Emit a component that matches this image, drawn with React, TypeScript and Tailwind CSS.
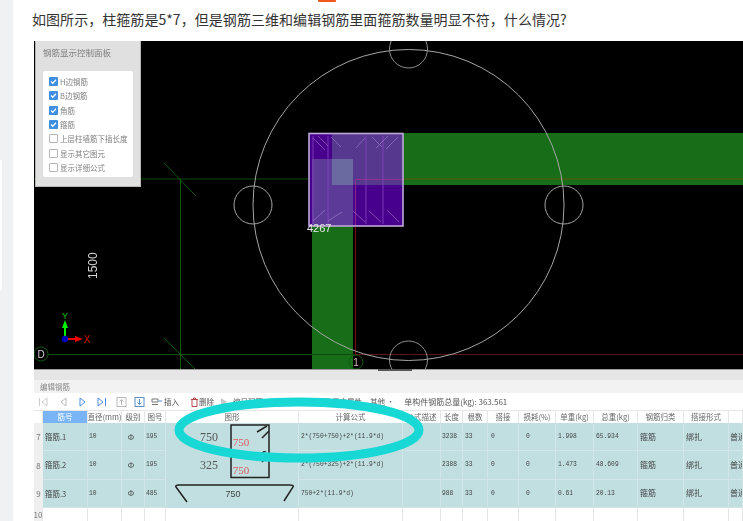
import React from "react";

const cjk = { fontFamily: '"Noto Sans CJK SC", "Liberation Sans", sans-serif' };

const heads = ["", "筋号", "直径(mm)", "级别", "图号", "图形", "计算公式", "公式描述", "长度", "根数", "搭接", "损耗(%)", "单重(kg)", "总重(kg)", "钢筋归类", "搭接形式", ""];
const gridCols = "grid grid-cols-[9px_45px_34px_23px_21px_133px_104px_38px_22px_25px_31px_37px_38px_44px_46px_45px_14px]";

const rows = [
  { n: "7", name: "箍筋.1", code: "195", formula: "2*(750+750)+2*(11.9*d)", len: "3238", unit: "1.998", total: "65.934", kind: 0, dim: "750" },
  { n: "8", name: "箍筋.2", code: "195", formula: "2*(750+325)+2*(11.9*d)", len: "2388", unit: "1.473", total: "48.609", kind: 1, dim: "325" },
  { n: "9", name: "箍筋.3", code: "485", formula: "750+2*(11.9*d)", len: "988", unit: "0.61", total: "20.13", kind: 2, dim: "750" },
];

function Shape({ kind, dim }: { kind: number; dim: string }) {
  if (kind === 2) {
    return (
      <svg width="133" height="28" viewBox="0 0 133 28" className="block">
        <path d="M21 22 L10 7 Q9 5 13 5 L124 5 Q128 5 127 7 L118 21" fill="none" stroke="#222" strokeWidth="1.5" />
        <text x="67" y="17" textAnchor="middle" fontSize="9" fill="#444" fontFamily="Liberation Sans">750</text>
      </svg>
    );
  }
  const top = kind === 0;
  return (
    <svg width="133" height="28" viewBox="0 0 133 28" className="block">
      <path d={top ? "M65 29 V2 H103 V29" : "M65 -2 V26.5 H103 V-2"} fill="none" stroke="#222" strokeWidth="1.5" />
      <path d={top ? "M91 9 L101 3 M96 15 L103 8" : "M91 5 L101 -1 M96 11 L103 4"} stroke="#222" strokeWidth="1.5" />
      <text x="43" y="18" textAnchor="middle" fontSize="12" fill="#555" fontFamily="Liberation Serif">{dim}</text>
      <text x="75" y="22.5" textAnchor="middle" fontSize="11" fill="#dc5a5a" fontFamily="Liberation Serif">750</text>
    </svg>
  );
}

function Tool({ children, label, className }: { children?: React.ReactNode; label?: string; className?: string }) {
  return (
    <div className={"flex items-center " + (className ?? "")}>
      {children}
      {label && <span className="text-[7.5px] text-[#555] whitespace-nowrap">{label}</span>}
    </div>
  );
}

const Check = ({ on, label }: { on: boolean; label: string }) => (
  <div className="flex h-[14.3px] items-center gap-[2px]">
    {on ? (
      <span className="flex h-[9px] w-[9px] items-center justify-center rounded-[1px] bg-[#3f8ee0]">
        <svg width="7" height="7" viewBox="0 0 8 8"><path d="M1.2 4 L3.2 6 L6.8 2" fill="none" stroke="#fff" strokeWidth="1.4" /></svg>
      </span>
    ) : (
      <span className="h-[9px] w-[9px] rounded-[1px] border border-[#b5b5b5] bg-white" />
    )}
    <span className="text-[7.5px] text-[#808080] whitespace-nowrap">{label}</span>
  </div>
);

function Canvas() {
  const diag = "#b48ad8";
  return (
    <svg className="absolute inset-0 h-full w-full" viewBox="34 41 709 328">
      <rect x="332" y="133" width="411" height="52" fill="#186e18" />
      <rect x="312" y="226" width="41" height="143" fill="#186e18" />
      <path d="M34 179 H743" stroke="#0b4d0b" strokeWidth="1" />
      <path d="M403 179 H743" stroke="#66661a" strokeWidth="1" />
      <path d="M180.5 179 V369 M164 163 L196 196 M164 338 L195 369" stroke="#0d5a0d" strokeWidth="1" fill="none" />
      <path d="M48 354.5 H356" stroke="#0d4d0d" strokeWidth="1" />
      <path d="M356 354.5 H743" stroke="#5a1414" strokeWidth="1" />
      <path d="M355.5 226 V355" stroke="#701010" strokeWidth="1.2" />
      <rect x="309" y="133" width="94" height="93" fill="#47008c" />
      <rect x="332" y="134" width="71" height="51" fill="#56388e" />
      <rect x="312" y="159" width="41" height="67" fill="#5c3b98" />
      <rect x="332" y="159" width="21" height="26" fill="#6a6aa0" />
      <path d="M355.5 180 V226 M355.5 179.5 H403" stroke="#a0308c" strokeWidth="0.8" />
      <path d="M313 136 V224 M328 136 V224 M366 136 V224 M383 136 V224" stroke="#8c44c4" strokeWidth="0.8" />
      <path d="M313 138 L325 150 M318 136 L328 146 M331 137 L341 147 M365 138 L356 148 M372 137 L382 147 M388 136 L376 148 M398 137 L386 149 M313 221 L325 210 M328 221 L342 212 M353 211 L365 222 M369 211 L381 222 M387 210 L399 222" stroke={diag} strokeWidth="0.8" opacity="0.65" />
      <rect x="309" y="133.5" width="94" height="92.5" fill="none" stroke="#bfa8d8" strokeWidth="1.6" />
      <circle cx="408.5" cy="205" r="155.5" fill="none" stroke="#a5a5a5" strokeWidth="1" />
      <circle cx="408.5" cy="49" r="19" fill="none" stroke="#8f8f8f" strokeWidth="1" />
      <circle cx="408.5" cy="360" r="19" fill="none" stroke="#8f8f8f" strokeWidth="1" />
      <circle cx="253" cy="205" r="19" fill="none" stroke="#a5a5a5" strokeWidth="1" />
      <circle cx="564" cy="205" r="19" fill="none" stroke="#a5a5a5" strokeWidth="1" />
      <text x="307" y="232" fontSize="11" fill="#e8e8e8" fontFamily="Liberation Sans">4267</text>
      <text x="0" y="0" fontSize="12" fill="#d4d4d4" fontFamily="Liberation Sans" transform="translate(97 279) rotate(-90)">1500</text>
      <circle cx="41" cy="354" r="7" fill="none" stroke="#0e5a0e" strokeWidth="1" />
      <text x="41" y="358" textAnchor="middle" fontSize="10" fill="#cfcfcf" fontFamily="Liberation Sans">D</text>
      <circle cx="356" cy="362" r="7" fill="none" stroke="#0e5a0e" strokeWidth="1" />
      <text x="356" y="366" textAnchor="middle" fontSize="10" fill="#d8b8b8" fontFamily="Liberation Sans">1</text>
      <path d="M65 336 V326" stroke="#00f000" strokeWidth="2" />
      <path d="M65 320 L62 328 H68 Z" fill="#00f000" />
      <path d="M68 339 H77" stroke="#f00000" strokeWidth="2" />
      <path d="M83 339 L75 336 V342 Z" fill="#f00000" />
      <circle cx="65" cy="339" r="3.2" fill="#0000c0" />
      <text x="65" y="319" textAnchor="middle" fontSize="9" fill="#00d000" fontFamily="Liberation Sans">Y</text>
      <text x="87" y="343" textAnchor="middle" fontSize="10" fill="#e00000" fontFamily="Liberation Sans">X</text>
    </svg>
  );
}

export default function App() {
  return (
    <div className="relative flex h-[521px] w-[743px] overflow-hidden bg-white" style={cjk}>
      <div className="w-[13px] shrink-0 bg-[#f0f1f3] pt-[160px]">
        <div className="h-[130px] w-[2px] bg-white" />
      </div>
      <div className="absolute left-[318px] top-0 h-[2px] w-[18px] rounded-b-[1px] bg-[#f0591e]" />
      <main className="flex min-w-0 flex-1 flex-col pl-[19px]">
        <div className="flex h-[41px] shrink-0 items-center pb-[3px] text-[14px] tracking-[0.05px] text-[#333] whitespace-nowrap">
          如图所示，柱箍筋是5*7，但是钢筋三维和编辑钢筋里面箍筋数量明显不符，什么情况?
        </div>
        <div className="relative ml-[2px] w-[709px] flex-1 overflow-hidden blur-[0.45px]">
          <div className="relative h-[328px] bg-black">
            <Canvas />
            <div className="absolute left-[1px] top-0 h-[146px] w-[106px] border-b border-r border-l border-[#b8b8b8] bg-[#e0e0e0] px-[7px]">
              <div className="pt-[4px] text-[8.5px] leading-[14px] text-[#7d7d7d] whitespace-nowrap">钢筋显示控制面板</div>
              <div className="mt-[12px] h-[106px] w-[90px] rounded-[2px] bg-white pl-[6px] pt-[3.5px]">
                <Check on label="H边钢筋" />
                <Check on label="B边钢筋" />
                <Check on label="角筋" />
                <Check on label="箍筋" />
                <Check on={false} label="上层柱墙筋下插长度" />
                <Check on={false} label="显示其它图元" />
                <Check on={false} label="显示详细公式" />
              </div>
            </div>
          </div>
          <div className="relative h-[11px] border-t border-[#9d9d9d] bg-[#e6e6e6]">
            <div className="absolute left-[344px] top-[-1px] h-[2px] w-[34px] bg-[#555]" />
          </div>
          <div className="flex h-[13px] items-center bg-[#f2f2f2] pl-[6px] text-[7.5px] text-[#888]">编辑钢筋</div>
          <div className="flex h-[17px] items-center bg-white pl-[4px] text-[#777]">
            <svg width="126" height="12" viewBox="0 0 126 12" className="shrink-0">
              <path d="M1.5 2 V10 M9 2 L4 6 L9 10 Z" fill="none" stroke="#ccc" />
              <path d="M28 2 L23 6 L28 10 Z" fill="none" stroke="#bbb" />
              <path d="M42 2 L47 6 L42 10 Z" fill="none" stroke="#4b90e0" />
              <path d="M60 2 L65 6 L60 10 Z M67.5 2 V10" fill="none" stroke="#4b90e0" />
              <rect x="79" y="1.5" width="9" height="9" fill="none" stroke="#bbb" />
              <path d="M83.5 9 V3.5 M81.5 5.5 L83.5 3.5 L85.5 5.5" fill="none" stroke="#bbb" />
              <rect x="97" y="1.5" width="9" height="9" fill="none" stroke="#5b8fc8" />
              <path d="M101.5 3 V8.5 M99.5 6.5 L101.5 8.5 L103.5 6.5" fill="none" stroke="#5b8fc8" />
              <path d="M114 3 H120 V6 H114 Z M114 8.5 H120" fill="none" stroke="#777" />
              <path d="M121 5 L124 5" stroke="#4b90e0" />
            </svg>
            <Tool label="插入" />
            <Tool className="ml-[11px]" label="删除">
              <svg width="9" height="10" viewBox="0 0 9 10" className="shrink-0"><path d="M1 2.5 H8 M2 2.5 V9.5 H7 V2.5 M3.5 2.5 V1 H5.5 V2.5" fill="none" stroke="#a33" strokeWidth="0.9" /></svg>
            </Tool>
            <Tool className="ml-[6px]" label="缩尺配筋">
              <svg width="8" height="10" viewBox="0 0 8 10" className="mr-[5px] shrink-0"><path d="M1 1 L7 5 L1 9 Z" fill="#c8c8c8" /></svg>
            </Tool>
            <Tool className="ml-[8px]" label="钢筋图库">
              <span className="mr-[2px] h-[8px] w-[8px] rounded-[1px] border border-[#aaa]" />
            </Tool>
            <Tool className="ml-[11px]" label="用户属性">
              <span className="mr-[2px] h-[8px] w-[8px] rounded-[1px] border border-[#aaa]" />
            </Tool>
            <span className="ml-[8px] text-[7.5px] whitespace-nowrap text-[#555]">其他 ·</span>
            <span className="ml-[10px] text-[8px] whitespace-nowrap text-[#555]">单构件钢筋总量(kg): 363.561</span>
          </div>
          <div className={gridCols + " h-[13px] bg-white"}>
            {heads.map((h, i) => (
              <div
                key={i}
                className={
                  "flex items-center justify-center overflow-hidden border-r border-t border-[#e6e6e6] text-[7.5px] whitespace-nowrap " +
                  (i === 1 ? "bg-[#78b4f6] text-white" : "text-[#666]")
                }
              >
                {h}
              </div>
            ))}
          </div>
          {rows.map((r) => {
            const num = "flex items-center border-r border-b border-[#d3e6e7] pl-[1px] text-[6.3px] text-[#444] overflow-hidden whitespace-nowrap";
            const mono = { fontFamily: '"Liberation Mono", monospace' };
            return (
              <div key={r.n} className={gridCols + " h-[28.4px] bg-[#c1dfe1]"}>
                <div className="flex items-center justify-center bg-[#efefef] text-[8px] text-[#777]">{r.n}</div>
                <div className={num + " text-[7.5px]! pl-[2px]!"}>{r.name}</div>
                <div className={num} style={mono}>10</div>
                <div className={num + " justify-center pr-[5px]! text-[8px]!"}>Φ</div>
                <div className={num} style={mono}>{r.code}</div>
                <div className="overflow-hidden border-r border-[#d3e6e7]"><Shape kind={r.kind} dim={r.dim} /></div>
                <div className={num + " pl-[2px]!"} style={mono}>{r.formula}</div>
                <div className={num} />
                <div className={num} style={mono}>{r.len}</div>
                <div className={num + " pl-[2px]!"} style={mono}>33</div>
                <div className={num + " pl-[3px]!"} style={mono}>0</div>
                <div className={num + " pl-[7px]!"} style={mono}>0</div>
                <div className={num + " pl-[2px]!"} style={mono}>{r.unit}</div>
                <div className={num + " pl-[2px]!"} style={mono}>{r.total}</div>
                <div className={num + " text-[8px]! pl-[2px]!"}>箍筋</div>
                <div className={num + " text-[8px]! pl-[2px]!"}>绑扎</div>
                <div className={num + " text-[8px]! pl-[1px]!"}>普通</div>
              </div>
            );
          })}
          <div className={gridCols + " h-[14px] bg-white"}>
            {heads.map((_, i) => (
              <div key={i} className={"flex items-center justify-center border-r border-[#e6e6e6] text-[8px] text-[#777] " + (i === 0 ? "bg-[#efefef]" : "")}>
                {i === 0 ? "10" : ""}
              </div>
            ))}
          </div>
          <svg className="absolute left-[135px] top-[352px] h-[75px] w-[260px] pointer-events-none" viewBox="0 0 260 75">
            <ellipse cx="130" cy="37" rx="120" ry="28" fill="none" stroke="#18d8d6" strokeWidth="9" />
          </svg>
        </div>
      </main>
    </div>
  );
}
